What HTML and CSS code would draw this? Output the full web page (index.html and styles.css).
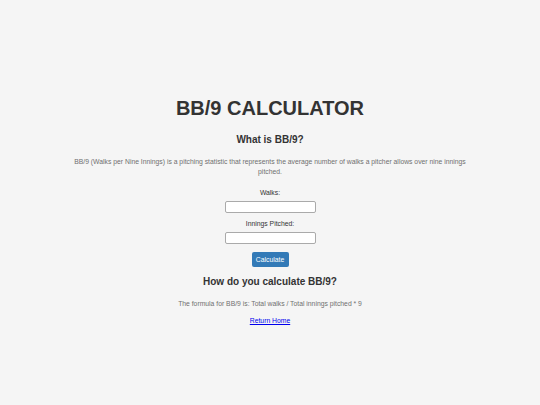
FILE: index.html
```html
<!DOCTYPE html>
<html>
<head>
<meta charset="utf-8">
<link rel="stylesheet" href="styles.css">
</head>
<body>
<div class="page">
  <h1 class="title">BB/9 CALCULATOR</h1>
  <h2 class="subtitle">What is BB/9?</h2>
  <p class="desc">BB/9 (Walks per Nine Innings) is a pitching statistic that represents the average number of walks a pitcher allows over nine innings pitched.</p>
  <form class="calc">
    <label class="label" for="walks">Walks:</label>
    <input class="field" id="walks" type="text">
    <label class="label" for="innings">Innings Pitched:</label>
    <input class="field" id="innings" type="text">
    <button class="btn" type="button">Calculate</button>
  </form>
  <h2 class="subtitle second">How do you calculate BB/9?</h2>
  <p class="formula">The formula for BB/9 is: Total walks / Total innings pitched * 9</p>
  <a class="home" href="#">Return Home</a>
</div>
</body>
</html>
```
FILE: styles.css
```css
html, body {
  margin: 0;
  padding: 0;
  background: #f5f5f5;
  font-family: "Liberation Sans", Arial, sans-serif;
}
.page {
  width: 400px;
  margin: 0 auto;
  padding-top: 96px;
  display: flex;
  flex-direction: column;
  align-items: center;
  text-align: center;
}
.title {
  margin: 0;
  font-size: 20px;
  line-height: 24px;
  font-weight: bold;
  color: #333;
}
.subtitle {
  margin: 14px 0 0;
  font-size: 10px;
  line-height: 12px;
  font-weight: bold;
  color: #333;
}
.desc {
  margin: 11px 0 0;
  font-size: 6.8px;
  line-height: 10px;
  color: #707070;
}
.calc {
  display: flex;
  flex-direction: column;
  align-items: center;
  margin-top: 12px;
}
.label {
  font-size: 6.8px;
  line-height: 8px;
  color: #333;
}
.field {
  box-sizing: border-box;
  width: 91px;
  height: 12px;
  margin: 4px 0 7px;
  border: 1px solid #aaa;
  border-radius: 2px;
  background: #fff;
  padding: 0;
}
.btn {
  box-sizing: border-box;
  width: 37px;
  height: 15px;
  margin-top: 1px;
  padding: 0;
  border: none;
  border-radius: 2px;
  background: #337ab7;
  color: #fff;
  font-family: "Liberation Sans", Arial, sans-serif;
  font-size: 6.8px;
}
.second {
  margin-top: 9px;
}
.formula {
  margin: 11px 0 0;
  font-size: 6.8px;
  line-height: 10px;
  color: #707070;
}
.home {
  margin-top: 7px;
  font-size: 6.8px;
  line-height: 10px;
  color: #0000ee;
}
```
